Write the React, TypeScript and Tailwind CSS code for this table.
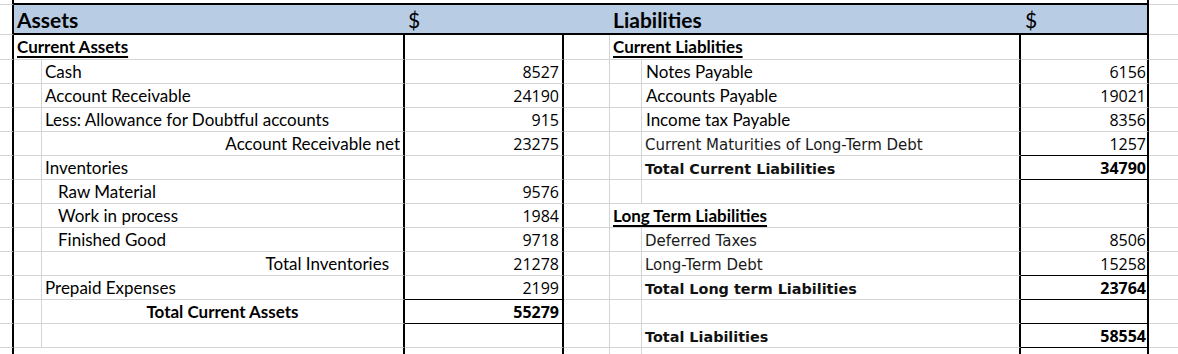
import React from "react";

const G = "border-b border-b-[#d4d4d4]";
const GB = "border-b border-b-black";
const RB = "border-r-2 border-r-black";
const RG = "border-r border-r-[#d4d4d4]";
const CAL = "[font-family:Lato,sans-serif] text-[17px] leading-[23px] text-black";
const CALB = "[font-family:Lato,sans-serif] text-[17px] leading-[23px] font-bold text-black";
const TAH = "[font-family:DejaVu_Sans,sans-serif] text-[15px] leading-[26px] text-[#1a1a1a]";
const TAHB = "[font-family:DejaVu_Sans,sans-serif] text-[14.4px] leading-[27px] font-bold text-[#111]";
const NUM = "[font-family:Open_Sans,sans-serif] text-[16px] leading-[24px] text-black text-right";

type AssetRow = {
  label: string;
  value: string;
  kind?: "indent" | "right" | "rightIndent" | "center";
  bold?: boolean;
  black?: boolean;
};

type LiabRow = {
  label: string;
  value: string;
  font?: "cal" | "tah" | "tahb" | "head";
  boldNum?: boolean;
  black?: boolean;
};

const assets: AssetRow[] = [
  { label: "Cash", value: "8527" },
  { label: "Account Receivable", value: "24190" },
  { label: "Less: Allowance for Doubtful accounts", value: "915" },
  { label: "Account Receivable net", value: "23275", kind: "right" },
  { label: "Inventories", value: "" },
  { label: "Raw Material", value: "9576", kind: "indent" },
  { label: "Work in process", value: "1984", kind: "indent" },
  { label: "Finished Good", value: "9718", kind: "indent" },
  { label: "Total Inventories", value: "21278", kind: "rightIndent" },
  { label: "Prepaid Expenses", value: "2199", black: true },
  { label: "Total Current Assets", value: "55279", kind: "center", bold: true, black: true },
  { label: "", value: "" },
];

const liabs: LiabRow[] = [
  { label: "Notes Payable", value: "6156", font: "cal" },
  { label: "Accounts Payable", value: "19021", font: "cal" },
  { label: "Income tax Payable", value: "8356", font: "cal" },
  { label: "Current Maturities of Long-Term Debt", value: "1257", font: "tah", black: true },
  { label: "Total Current Liabilities", value: "34790", font: "tahb", boldNum: true, black: true },
  { label: "", value: "" },
  { label: "Long Term Liabilities", value: "", font: "head" },
  { label: "Deferred Taxes", value: "8506", font: "tah" },
  { label: "Long-Term Debt", value: "15258", font: "tah", black: true },
  { label: "Total Long term Liabilities", value: "23764", font: "tahb", boldNum: true, black: true },
  { label: "", value: "", black: true },
  { label: "Total Liabilities", value: "58554", font: "tahb", boldNum: true, black: true },
];

function assetLabelClass(r: AssetRow) {
  const base = r.bold ? CALB : CAL;
  switch (r.kind) {
    case "indent":
      return `${base} pl-[16px]`;
    case "right":
      return `${base} text-right pr-[3px]`;
    case "rightIndent":
      return `${base} text-right pr-[14px]`;
    case "center":
      return `${base} text-center`;
    default:
      return `${base} pl-[3px]`;
  }
}

function liabLabelClass(r: LiabRow) {
  if (r.font === "tah") return `${TAH} pl-[3px]`;
  if (r.font === "tahb") return `${TAHB} pl-[3px]`;
  return `${CAL} pl-[4px]`;
}

export default function App() {
  const cells: React.ReactNode[] = [];

  // Row 0 (top strip)
  cells.push(<div key="r0a" className={`${RB} ${G}`} />);
  cells.push(<div key="r0m" className={`col-span-7 ${RB} border-b-2 border-b-black`} />);
  cells.push(<div key="r0i" className={G} />);

  // Row 1 header
  cells.push(<div key="r1a" className={`${RB} ${G}`} />);
  cells.push(
    <div key="r1b" className="col-span-2 bg-[#b8cce4] border-b-2 border-b-black pl-[3px] [font-family:Lato,sans-serif] text-[21px] leading-[30px] font-bold text-black whitespace-nowrap">
      Assets
    </div>
  );
  cells.push(
    <div key="r1d" className="bg-[#b8cce4] border-b-2 border-b-black pl-[3px] [font-family:Lato,sans-serif] text-[21px] leading-[30px] text-black">
      $
    </div>
  );
  cells.push(
    <div key="r1e" className="col-span-3 bg-[#b8cce4] border-b-2 border-b-black pl-[49px] [font-family:Lato,sans-serif] text-[21px] leading-[30px] font-bold text-black whitespace-nowrap">
      Liabilities
    </div>
  );
  cells.push(
    <div key="r1h" className={`bg-[#b8cce4] border-b-2 border-b-black ${RB} pl-[4px] [font-family:Lato,sans-serif] text-[21px] leading-[30px] text-black`}>
      $
    </div>
  );
  cells.push(<div key="r1i" className={G} />);

  // Row 2 sub headers
  cells.push(<div key="r2a" className={`${RB} ${G}`} />);
  cells.push(
    <div key="r2b" className={`col-span-2 ${RB} ${G} pl-[3px]`}>
      <span className={`${CALB} leading-[24px] underline decoration-2 underline-offset-[3px] whitespace-nowrap`}>Current Assets</span>
    </div>
  );
  cells.push(<div key="r2d" className={`${RB} ${G}`} />);
  cells.push(<div key="r2e" className={`${RG} ${G}`} />);
  cells.push(
    <div key="r2f" className={`col-span-2 ${RB} ${G} pl-[3px]`}>
      <span className={`${CALB} leading-[24px] underline decoration-2 underline-offset-[3px] whitespace-nowrap`}>Current Liablities</span>
    </div>
  );
  cells.push(<div key="r2h" className={`${RB} ${G}`} />);
  cells.push(<div key="r2i" className={G} />);

  // Data rows
  assets.forEach((a, i) => {
    const l = liabs[i];
    cells.push(<div key={`a${i}`} className={`${RB} ${G}`} />);
    cells.push(<div key={`b${i}`} className={`${RG} ${G}`} />);
    cells.push(
      <div key={`c${i}`} className={`${RB} ${G} whitespace-nowrap ${assetLabelClass(a)}`}>
        {a.label}
      </div>
    );
    cells.push(
      <div key={`d${i}`} className={`${RB} ${a.black ? GB : G} ${NUM} pr-[3px] ${a.bold ? "font-bold" : ""}`}>
        {a.value}
      </div>
    );
    cells.push(<div key={`e${i}`} className={`${RG} ${G}`} />);
    if (l.font === "head") {
      cells.push(
        <div key={`f${i}`} className={`col-span-2 ${RB} ${G} pl-[3px]`}>
          <span className={`${CALB} underline decoration-2 underline-offset-[3px] whitespace-nowrap`}>{l.label}</span>
        </div>
      );
    } else {
      cells.push(<div key={`f${i}`} className={`${RG} ${G}`} />);
      cells.push(
        <div key={`g${i}`} className={`${RB} ${G} whitespace-nowrap ${liabLabelClass(l)}`}>
          {l.label}
        </div>
      );
    }
    cells.push(
      <div key={`h${i}`} className={`${RB} ${l.black ? GB : G} ${NUM} pr-[1px] ${l.boldNum ? "font-bold" : ""}`}>
        {l.value}
      </div>
    );
    cells.push(<div key={`i${i}`} className={G} />);
  });

  // Bottom partial row
  cells.push(<div key="za" className={RB} />);
  cells.push(<div key="zb" />);
  cells.push(<div key="zc" className={RB} />);
  cells.push(<div key="zd" className={RB} />);
  cells.push(<div key="ze" className={RG} />);
  cells.push(<div key="zf" className={RG} />);
  cells.push(<div key="zg" className={RB} />);
  cells.push(<div key="zh" className={RB} />);
  cells.push(<div key="zi" />);

  return (
    <div className="w-[1178px] h-[354px] overflow-hidden bg-white">
      <div className="grid grid-cols-[14px_28px_363px_159px_46px_32px_379px_128px_29px] grid-rows-[5px_30px_25px_repeat(12,24px)_6px]">
        {cells}
      </div>
    </div>
  );
}
